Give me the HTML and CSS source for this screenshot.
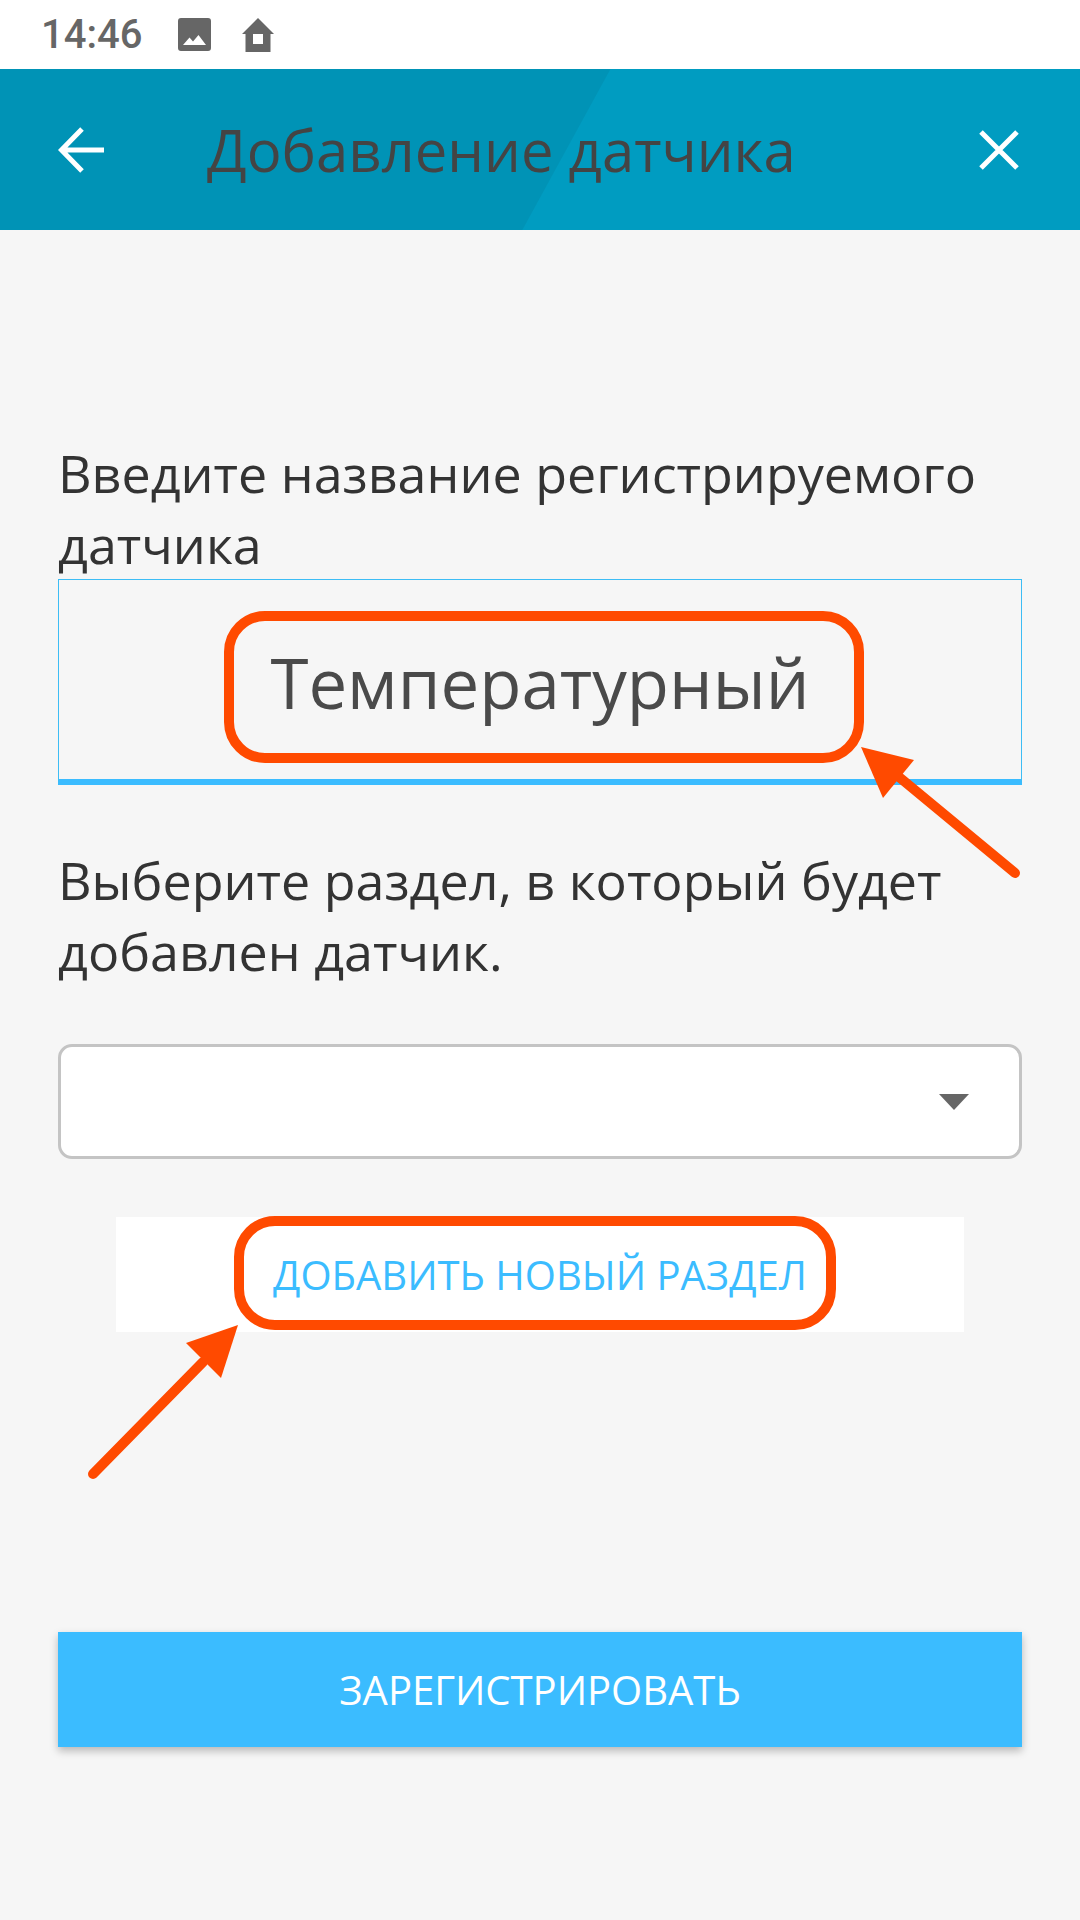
FILE: index.html
```html
<!DOCTYPE html>
<html lang="ru">

<head>
    <meta charset="UTF-8">
    <meta name="viewport" content="width=device-width, initial-scale=1.0">
    <title>Добавление датчика</title>
    <link rel="stylesheet" href="styles.css">
</head>

<body>

    <div class="status-bar">
        <span class="status-time">14:46</span>
        <svg class="status-icon" width="33" height="33" viewBox="0 0 33 33">
            <path fill="#666" fill-rule="evenodd" d="M3 0h27a3 3 0 0 1 3 3v27a3 3 0 0 1-3 3H3a3 3 0 0 1-3-3V3a3 3 0 0 1 3-3z
                M5 27h23l-7.500-10-5.500 6.500-3.500-4z" />
        </svg>
        <svg class="status-icon" width="32" height="34" viewBox="0 0 32 34">
            <path fill="#666" fill-rule="evenodd" d="M16 0l16 16h-3.500v18h-25V16H0z M11 16v10h10V16z" />
        </svg>
    </div>

    <header class="app-bar">
        <svg class="bar-icon" width="46" height="46" viewBox="0 0 46 46">
            <path fill="none" stroke="#fff" stroke-width="5" d="M46 23H4M24 2L3.500 23 24 44" />
        </svg>
        <h1 class="bar-title">Добавление датчика</h1>
        <svg class="bar-icon" width="40" height="40" viewBox="0 0 40 40">
            <path fill="none" stroke="#fff" stroke-width="5" d="M2 2l36 36M38 2L2 38" />
        </svg>
    </header>

    <main class="form">
        <p class="form-label">Введите название регистрируемого датчика</p>
        <div class="name-input">Температурный</div>

        <p class="form-label form-label-second">Выберите раздел, в который будет добавлен датчик.</p>
        <div class="section-select">
            <span class="select-caret"></span>
        </div>

        <button type="button" class="add-section">ДОБАВИТЬ НОВЫЙ РАЗДЕЛ</button>
        <button type="button" class="register">ЗАРЕГИСТРИРОВАТЬ</button>
    </main>

    <!-- red marks drawn over the screenshot -->
    <svg class="marks" width="1080" height="1920" viewBox="0 0 1080 1920">
        <g fill="none" stroke="#ff4a00" stroke-width="10">
            <rect x="229" y="616" width="630" height="142" rx="36" />
            <rect x="239" y="1221" width="592" height="104" rx="36" />
        </g>
        <g fill="none" stroke="#ff4a00" stroke-width="10" stroke-linecap="round">
            <path d="M1015 873L893 772" />
            <path d="M93 1474L203 1362" />
        </g>
        <g fill="#ff4a00">
            <path d="M861 747L914 760 883 798z" />
            <path d="M238 1325L186 1343 221 1378z" />
        </g>
    </svg>

</body>

</html>
```

FILE: styles.css
```css
body {
    margin: 0;
    width: 1080px;
    height: 1920px;
    overflow: hidden;
    position: relative;
    background-color: #f6f6f6;
    font-family: "Open Sans", sans-serif;
}

.status-bar {
    height: 69px;
    display: flex;
    align-items: center;
    padding-left: 41px;
    background-color: #fff;
}

.status-time {
    font-family: Roboto, sans-serif;
    font-size: 40px;
    font-weight: 500;
    color: #666;
    margin-right: 36px;
}

.status-icon {
    margin-right: 31px;
}

.app-bar {
    height: 161px;
    display: flex;
    align-items: center;
    padding: 0 61px 0 58px;
    background: linear-gradient(118.7deg, #0093b6 0, #0093b6 535px, #009cc1 536px);
}

.bar-title {
    flex: 1;
    margin: 0 0 0 103px;
    font-size: 58px;
    font-weight: 400;
    color: #444;
}

.form {
    padding: 207px 58px 0;
}

.form-label {
    margin: 0;
    font-size: 52px;
    line-height: 71px;
    color: #333;
}

.form-label-second {
    margin-top: 59px;
}

.name-input {
    height: 194px;
    padding-top: 5px;
    display: flex;
    align-items: center;
    justify-content: center;
    border: 1px solid #3dbdf5;
    border-bottom: 6px solid #3bbcff;
    font-size: 69px;
    color: #4a4a4a;
}

.section-select {
    height: 109px;
    margin-top: 58px;
    display: flex;
    align-items: center;
    justify-content: flex-end;
    padding-right: 50px;
    background-color: #fff;
    border: 3px solid #c4c4c4;
    border-radius: 14px;
}

.select-caret {
    width: 0;
    height: 0;
    border-left: 15px solid transparent;
    border-right: 15px solid transparent;
    border-top: 16px solid #666;
}

.add-section,
.register {
    display: block;
    border: none;
    font-family: "Open Sans", sans-serif;
    font-size: 40px;
    cursor: pointer;
}

.add-section {
    width: 848px;
    height: 115px;
    margin: 58px auto 0;
    background-color: #fff;
    color: #3bbcff;
}

.register {
    width: 100%;
    height: 115px;
    margin-top: 300px;
    background-color: #3bbcff;
    color: #fff;
    box-shadow: 0 4px 8px rgba(0, 0, 0, 0.25);
}

.marks {
    position: absolute;
    top: 0;
    left: 0;
    pointer-events: none;
}
```
